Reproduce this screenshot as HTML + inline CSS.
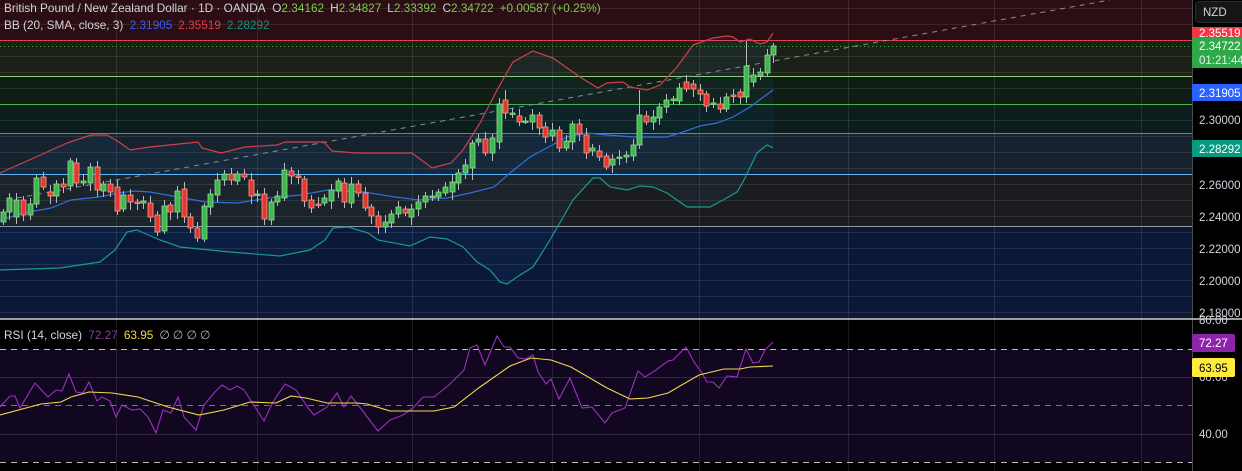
<!DOCTYPE html>
<html><head><meta charset="utf-8">
<style>
html,body{margin:0;padding:0;background:#000;width:1242px;height:471px;overflow:hidden;font-family:"Liberation Sans",sans-serif;}
svg{position:absolute;left:0;top:0}
.t{font-family:"Liberation Sans",sans-serif;}
</style></head><body>
<svg id="s" width="1242" height="471" xmlns="http://www.w3.org/2000/svg">
<rect x="0" y="0" width="1192" height="40" fill="#2a0e13"/>
<rect x="0" y="40" width="1192" height="36" fill="#1c2118"/>
<rect x="0" y="76" width="1192" height="28" fill="#101d14"/>
<rect x="0" y="104" width="1192" height="29" fill="#0b1d1c"/>
<rect x="0" y="133" width="1192" height="41" fill="#16232f"/>
<rect x="0" y="174" width="1192" height="52" fill="#1b1c1f"/>
<rect x="0" y="226" width="1192" height="92" fill="#0b1838"/>
<g id="grid" stroke="rgba(255,255,255,0.09)" stroke-width="1"></g>
<rect x="0" y="320" width="1192" height="151" fill="#000"/>
<rect x="0" y="349" width="1192" height="113" fill="#120720"/>
<g stroke="rgba(255,255,255,0.12)"><line x1="0" y1="377.5" x2="1192" y2="377.5"/><line x1="0" y1="434.5" x2="1192" y2="434.5"/></g>
<g stroke="#bdbdbd" stroke-dasharray="6,5" stroke-width="1"><line x1="0" y1="349.5" x2="1192" y2="349.5"/><line x1="0" y1="405.5" x2="1192" y2="405.5" stroke="#777"/><line x1="0" y1="462.5" x2="1192" y2="462.5"/></g>
<g id="vgrid" stroke="rgba(255,255,255,0.1)"></g>
<line x1="0" y1="319" x2="1242" y2="319" stroke="#d0d0d0" stroke-width="1.5"/>
<line x1="0" y1="40.5" x2="1192" y2="40.5" stroke="#e0444f"/>
<line x1="0" y1="46.5" x2="1192" y2="46.5" stroke="#4caf50" stroke-dasharray="1,3"/>
<line x1="0" y1="76.5" x2="1192" y2="76.5" stroke="#8fcf7a"/>
<line x1="0" y1="104.5" x2="1192" y2="104.5" stroke="#4caf50"/>
<line x1="0" y1="133.5" x2="1192" y2="133.5" stroke="#26a69a"/>
<line x1="0" y1="174.5" x2="1192" y2="174.5" stroke="#64b5f6"/>
<line x1="0" y1="226.5" x2="1192" y2="226.5" stroke="#9598a1"/>
<line x1="17" y1="198" x2="1110" y2="0" stroke="#8a8e96" stroke-dasharray="5,5"/>
<g id="bb" fill="none" stroke-width="1.2"></g>
<g id="candles"></g>
<g id="rsi" fill="none" stroke-width="1.1"></g>
<rect x="1192" y="0" width="50" height="471" fill="#000"/>
<line x1="1192.5" y1="0" x2="1192.5" y2="471" stroke="#4a4a4a"/>
<line x1="1192" y1="319" x2="1242" y2="319" stroke="#d0d0d0" stroke-width="1.5"/>
<g class="t" font-size="11.5" fill="#d1d4dc">
<text x="1199" y="124">2.30000</text>
<text x="1199" y="189">2.26000</text>
<text x="1199" y="221">2.24000</text>
<text x="1199" y="253">2.22000</text>
<text x="1199" y="285">2.20000</text>
<text x="1199" y="317">2.18000</text>
<text x="1199" y="324">80.00</text>
<text x="1199" y="381">60.00</text>
<text x="1199" y="438">40.00</text>
</g>
<rect x="1195.5" y="1.5" width="50" height="21" rx="4" fill="#161616" stroke="#2c2c2c"/>
<text x="1203" y="16" class="t" font-size="11.5" fill="#d1d4dc">NZD</text>
<rect x="1192" y="27" width="50" height="11" fill="#f23645"/>
<text x="1199" y="37" class="t" font-size="11.5" fill="#fff">2.35519</text>
<rect x="1192" y="38" width="50" height="30" fill="#2fa84a"/>
<text x="1199" y="50" class="t" font-size="11.5" fill="#fff">2.34722</text>
<text x="1199" y="64" class="t" font-size="11.5" fill="#e8f5e9">01:21:44</text>
<rect x="1192" y="84" width="50" height="17" fill="#2962ff"/>
<text x="1199" y="97" class="t" font-size="11.5" fill="#fff">2.31905</text>
<rect x="1192" y="140" width="50" height="17" fill="#089981"/>
<text x="1199" y="153" class="t" font-size="11.5" fill="#fff">2.28292</text>
<rect x="1192" y="334" width="43" height="18" rx="2" fill="#8e24aa"/>
<text x="1199" y="347" class="t" font-size="11.5" fill="#fff">72.27</text>
<rect x="1192" y="358" width="43" height="19" rx="2" fill="#ffeb3b"/>
<text x="1199" y="372" class="t" font-size="11.5" fill="#000">63.95</text>
<g class="t" font-size="11.8">
<text x="4" y="12" fill="#d1d4dc">British Pound / New Zealand Dollar · 1D · OANDA <tspan dx="4">O</tspan><tspan fill="#7cc94f">2.34162</tspan><tspan dx="6">H</tspan><tspan fill="#7cc94f">2.34827</tspan><tspan dx="6">L</tspan><tspan fill="#7cc94f">2.33392</tspan><tspan dx="6">C</tspan><tspan fill="#7cc94f">2.34722</tspan><tspan dx="6" fill="#7cc94f">+0.00587 (+0.25%)</tspan></text>
<text x="4" y="29" fill="#d1d4dc">BB (20, SMA, close, 3) <tspan dx="3" fill="#2962ff">2.31905</tspan><tspan dx="6" fill="#f23645">2.35519</tspan><tspan dx="6" fill="#089981">2.28292</tspan></text>
<text x="4" y="339" fill="#d1d4dc">RSI (14, close) <tspan dx="3" fill="#8e3ca8">72.27</tspan><tspan dx="6" fill="#f0d84a">63.95</tspan><tspan dx="6" fill="#b0b0b0">∅  ∅  ∅  ∅</tspan></text>
</g>
</svg>
<script>
var NS="http://www.w3.org/2000/svg";
function el(p,n,a){var e=document.createElementNS(NS,n);for(var k in a)e.setAttribute(k,a[k]);p.appendChild(e);return e;}
var g=document.getElementById('grid');
for(var y=8;y<318;y+=16){el(g,'line',{x1:0,y1:y+.5,x2:1192,y2:y+.5});}
var vg=document.getElementById('vgrid');
[116,257,412,552,699,848,994,1141].forEach(function(x){el(vg,'line',{x1:x+.5,y1:0,x2:x+.5,y2:471});});
function pl(p,pts,c){el(p,'polyline',{points:pts.map(function(q){return q.join(',')}).join(' '),stroke:c});}
var bb=document.getElementById('bb');
var up=[[0,173],[36,157],[67,143],[91,135],[107,135],[119,142],[130,150],[150,147],[198,142],[202,148],[221,153],[245,147],[277,145],[285,142],[324,142],[332,151],[356,153],[412,153],[432,168],[451,163],[463,150],[480,123],[497,90],[513,62],[533,51],[553,58],[580,77],[598,88],[607,83],[623,82],[630,87],[647,90],[660,85],[677,67],[693,45],[713,38],[727,36],[733,37],[740,42],[750,39],[760,44],[767,42],[773,33]];
var mid=[[0,220],[24,213],[51,208],[71,200],[99,197],[119,193],[134,191],[150,192],[178,197],[206,202],[237,203],[269,198],[300,195],[328,190],[364,192],[395,197],[419,200],[447,198],[470,193],[494,187],[510,173],[530,157],[543,150],[567,137],[587,133],[607,135],[633,137],[667,137],[683,132],[700,126],[717,123],[733,117],[750,107],[773,90]];
var lo=[[0,270],[60,268],[100,262],[115,250],[127,232],[137,230],[160,240],[180,247],[230,252],[280,256],[310,250],[325,240],[333,228],[348,227],[368,233],[378,240],[410,246],[430,237],[447,239],[463,247],[477,262],[490,270],[500,282],[507,284],[520,275],[533,267],[550,240],[573,200],[593,178],[600,178],[610,187],[627,190],[640,186],[653,187],[667,193],[687,207],[710,207],[723,200],[737,192],[743,182],[757,153],[767,145],[773,148]];
var fill=up.concat(lo.slice().reverse());
el(bb,'polygon',{points:fill.map(function(q){return q.join(',')}).join(' '),fill:'rgba(33,150,243,0.06)',stroke:'none'});
pl(bb,up,'#d0404c');pl(bb,mid,'#2f6fe0');pl(bb,lo,'#1a9a8a');
var C=[[222,212],[212,198],[217,200],[200,215],[215,204],[204,178],[177,187],[192,196],[196,184],[184,187],[186,161],[163,183],[183,181],[183,167],[167,190],[191,184],[184,192],[187,211],[209,195],[195,202],[202,203],[203,201],[203,217],[215,232],[231,206],[205,212],[212,191],[189,217],[217,228],[228,238],[239,206],[207,194],[195,180],[180,174],[174,180],[181,174],[174,177],[180,196],[195,194],
[194,219],[220,202],[202,196],[198,170],[171,176],[176,177],[179,201],[200,208],[204,204],[203,198],[201,190],[191,181],[183,202],[203,184],[184,193],[193,208],[207,216],[216,227],[227,222],[223,214],[214,207],[209,213],[217,209],[209,202],[202,196],[196,196],[197,192],[193,187],[192,182],[183,173],[173,165],[168,143],[142,139],[139,153],[153,138],[142,104],[100,113],[113,113],
[116,122],[121,121],[122,115],[115,128],[127,137],[136,130],[130,148],[148,141],[142,124],[124,134],[135,153],[151,148],[151,157],[156,167],[165,159],[158,157],[157,155],[156,145],[145,115],[116,122],[122,117],[118,107],[107,100],[99,99],[101,88],[82,89],[84,89],[90,94],[94,106],[103,103],[104,109],[109,97],[95,95],[92,97],[97,66],[82,75],[76,72],[73,55],[55,46]];
var cg=document.getElementById('candles');
C.forEach(function(c,i){var x=Math.round(2.7+6.7*i);var o=c[0],cl=c[1];var top=Math.min(o,cl),bot=Math.max(o,cl);
var ext1=3+((i*7)%5),ext2=3+((i*11)%6);
if(i==95||i==111)ext1=25; if(i==75)ext1=10; if(i==70)ext2=12;
el(cg,'line',{x1:x+.5,y1:top-ext1,x2:x+.5,y2:bot+ext2,stroke:'#b7bac2','stroke-width':1});
var green=cl<o||(cl==o&&i%2==0);
var h=Math.max(bot-top,1.5);
el(cg,'rect',{x:x-2,y:top,width:5,height:h,fill:green?'#3fb64e':'#e5362f',stroke:green?'#8fdc8f':'#f7a08a','stroke-width':0.8});});
var rg=document.getElementById('rsi');
var rs=[[0,407],[10,396],[15,396],[20,408],[35,383],[48,397],[56,390],[62,391],[69,374],[76,392],[83,393],[89,382],[97,401],[102,397],[110,401],[116,417],[122,405],[132,410],[140,409],[148,417],[156,433],[163,410],[171,413],[178,397],[184,417],[196,430],[204,405],[214,393],[222,385],[230,390],[237,386],[244,390],[255,407],[264,421],[273,402],[285,384],[296,390],[309,409],[314,415],[327,407],[337,393],[344,407],[351,396],[362,410],[378,431],[390,420],[403,415],[413,408],[423,397],[434,397],[449,385],[464,370],[470,348],[477,345],[485,365],[497,336],[504,347],[510,347],[518,358],[526,359],[533,355],[538,372],[546,384],[551,379],[559,399],[570,378],[582,408],[592,407],[605,423],[612,413],[625,408],[638,371],[645,377],[656,370],[668,361],[673,360],[686,347],[694,362],[702,373],[707,382],[713,382],[719,388],[727,376],[737,377],[746,349],[753,363],[759,362],[765,350],[773,342]];
var ma=[[0,415],[26,408],[41,404],[61,402],[71,397],[89,392],[112,393],[138,397],[153,402],[168,407],[199,415],[224,410],[250,402],[276,403],[291,396],[306,398],[327,403],[357,403],[367,404],[390,411],[434,411],[454,407],[480,387],[510,366],[531,358],[551,360],[571,367],[607,388],[630,399],[648,398],[668,393],[699,375],[724,369],[740,369],[750,367],[773,366]];
pl(rg,rs,'#9b30c0');pl(rg,ma,'#f2d94e');
</script>
</body></html>
